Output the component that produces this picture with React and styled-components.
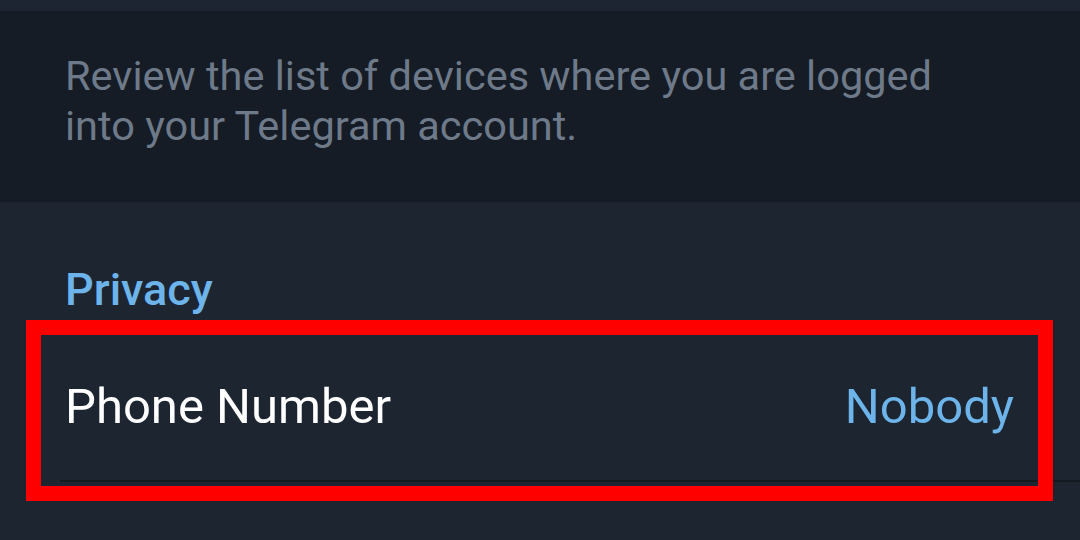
import React from 'react';
import styled, {createGlobalStyle} from 'styled-components';

const colors = {
  topBar: '#1c2531',
  infoBg: '#151c25',
  sectionBg: '#1d2531',
  hint: '#6e7a89',
  accent: '#6cb4ea',
  title: '#ffffff',
  divider: '#131a22',
  highlight: '#ff0000',
};

const GlobalStyle = createGlobalStyle`
  html, body {
    margin: 0;
    padding: 0;
    background: ${colors.sectionBg};
    font-family: Roboto, "Noto Sans", sans-serif;
  }
`;

const Screen = styled.div`
  width: 1080px;
  height: 540px;
  overflow: hidden;
  display: flex;
  flex-direction: column;
  background: ${colors.sectionBg};
`;

const TopStrip = styled.div`
  height: 11px;
  background: ${colors.topBar};
`;

const InfoBlock = styled.div`
  height: 191px;
  box-sizing: border-box;
  background: ${colors.infoBg};
  padding: 40px 65px 0 65px;
`;

const InfoText = styled.p`
  margin: 0;
  color: ${colors.hint};
  font-size: 41.5px;
  line-height: 50px;
  max-width: 890px;
`;

const Section = styled.section`
  display: flex;
  flex-direction: column;
  padding-top: 60px;
`;

const SectionHeader = styled.h2`
  margin: 0 0 0 65px;
  color: ${colors.accent};
  font-size: 45px;
  font-weight: 500;
  line-height: 56px;
`;

const Row = styled.div`
  position: relative;
  display: flex;
  align-items: center;
  justify-content: space-between;
  height: 148px;
  margin-top: 16px;
  padding: 0 66px 0 65px;
`;

const RowText = styled.span`
  color: ${(props) => (props.accent ? colors.accent : colors.title)};
  font-size: 49px;
  margin-bottom: 4px;
`;

const Divider = styled.div`
  position: absolute;
  left: 60px;
  right: 0;
  bottom: 0;
  height: 2px;
  background: ${colors.divider};
`;

const Highlight = styled.div`
  position: absolute;
  left: 26px;
  right: 27px;
  top: -14px;
  bottom: -19px;
  border: 15px solid ${colors.highlight};
  pointer-events: none;
`;

function App() {
  return (
    <Screen>
      <GlobalStyle />
      <TopStrip />
      <InfoBlock>
        <InfoText>
          Review the list of devices where you are logged into your Telegram account.
        </InfoText>
      </InfoBlock>
      <Section>
        <SectionHeader>Privacy</SectionHeader>
        <Row>
          <RowText>Phone Number</RowText>
          <RowText accent>Nobody</RowText>
          <Divider />
          <Highlight />
        </Row>
      </Section>
    </Screen>
  );
}

export default App;
